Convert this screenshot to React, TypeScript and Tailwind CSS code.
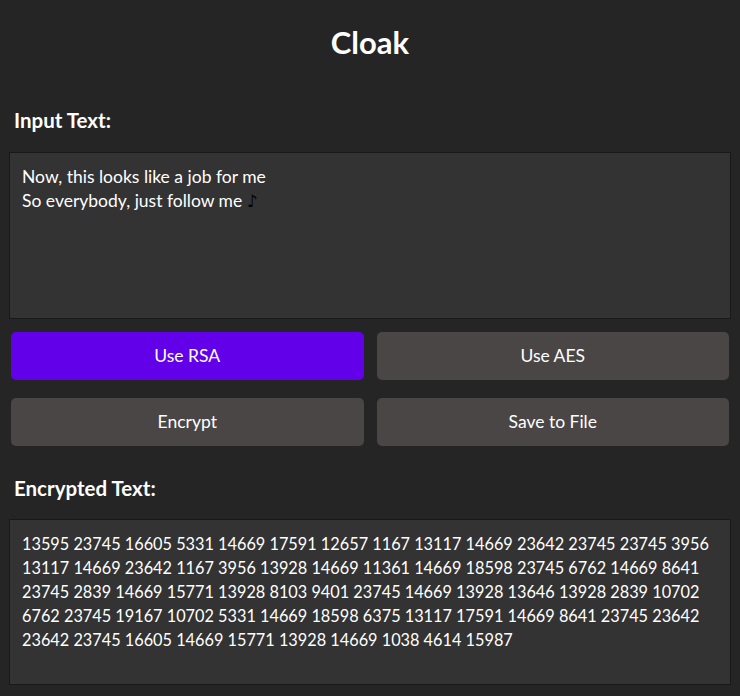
import React from "react"

const inputText = "Now, this looks like a job for me\nSo everybody, just follow me "

const encrypted =
  "13595 23745 16605 5331 14669 17591 12657 1167 13117 14669 23642 23745 23745 3956 13117 14669 23642 1167 3956 13928 14669 11361 14669 18598 23745 6762 14669 8641 23745 2839 14669 15771 13928 8103 9401 23745 14669 13928 13646 13928 2839 10702 6762 23745 19167 10702 5331 14669 18598 6375 13117 17591 14669 8641 23745 23642 23642 23745 16605 14669 15771 13928 14669 1038 4614 15987"

export default function App() {
  return (
    <div className="min-h-screen bg-[#252525] px-[9px] text-white font-['Lato','Noto_Sans',sans-serif]">
      <h1 className="pt-6 text-center text-[31px] font-bold leading-[36px]">Cloak</h1>

      <p className="mt-12 pl-[5px] text-[20.5px] font-bold leading-6">Input Text:</p>
      <div className="mt-5 h-[167px] border border-[#191919] bg-[#333333] px-3 py-3 text-[17.5px] leading-6 whitespace-pre-wrap">
        {inputText}
        <span className="font-['DejaVu_Sans',sans-serif] text-[17px] leading-none text-black">♪</span>
      </div>

      <div className="mx-[2px] mt-[13px] grid grid-cols-2 gap-x-[13px] gap-y-[18px] text-[17.5px]">
        <button className="h-12 rounded-[5px] bg-[#6200ea]">Use RSA</button>
        <button className="h-12 rounded-[5px] bg-[#4a4646]">Use AES</button>
        <button className="h-12 rounded-[5px] bg-[#4a4646]">Encrypt</button>
        <button className="h-12 rounded-[5px] bg-[#4a4646]">Save to File</button>
      </div>

      <p className="mt-[30px] pl-[5px] text-[20.5px] font-bold leading-6">Encrypted Text:</p>
      <div className="mt-[19px] h-[166px] border border-[#191919] bg-[#333333] px-3 py-3 text-[16.3px] leading-6 whitespace-pre-wrap">
        {encrypted}
      </div>
    </div>
  )
}
